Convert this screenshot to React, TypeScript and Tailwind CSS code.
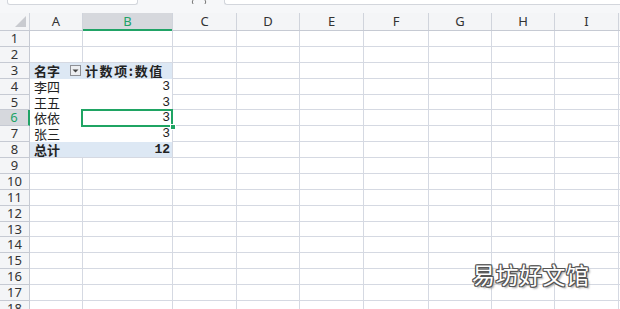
const cols = [
  { key: "A", w: "w-[53px]" },
  { key: "B", w: "w-[90px]" },
  { key: "C", w: "w-[64px]" },
  { key: "D", w: "w-[63px]" },
  { key: "E", w: "w-[64px]" },
  { key: "F", w: "w-[65px]" },
  { key: "G", w: "w-[63px]" },
  { key: "H", w: "w-[63px]" },
  { key: "I", w: "w-[64px]" },
];

const rows = Array.from({ length: 18 }, (_, i) => i + 1);

const names: Record<number, string> = { 4: "李四", 5: "王五", 6: "依依", 7: "张三" };

function PivotCell({ row, col }: { row: number; col: string }) {
  if (row === 3 && col === "A") {
    return (
      <div className="flex items-center justify-between h-full pl-[4px] pr-[2px] font-bold">
        <span>名字</span>
        <span className="w-[11px] h-[11px] border border-[#8e9095] bg-[#eceef1] flex items-center justify-center">
          <svg width="7" height="4" viewBox="0 0 7 4">
            <path d="M0.5 0.5 L6.5 0.5 L3.5 3.5 Z" fill="#444" />
          </svg>
        </span>
      </div>
    );
  }
  if (row === 3 && col === "B") {
    return <div className="h-full pl-[2px] font-bold tracking-[1.6px] whitespace-nowrap">计数项:数值</div>;
  }
  if (row === 8 && col === "A") {
    return <div className="h-full pl-[4px] font-bold">总计</div>;
  }
  if (row === 8 && col === "B") {
    return <div className="h-full text-right pr-[2px] font-bold font-['Liberation_Mono',monospace]">12</div>;
  }
  if (names[row] && col === "A") {
    return <div className="h-full pl-[4px]">{names[row]}</div>;
  }
  if (names[row] && col === "B") {
    return <div className="h-full text-right pr-[2px] font-['Liberation_Mono',monospace]">3</div>;
  }
  return null;
}

export default function App() {
  return (
    <div className="relative w-[620px] h-[309px] overflow-hidden bg-white font-['Noto_Sans','Noto_Sans_CJK_SC',sans-serif] text-[#222]">
      {/* formula bar strip */}
      <div className="h-[13px] bg-[#f6f7f9] flex items-start">
        <div className="ml-[7px] w-[131px] h-[5px] bg-white border border-t-0 border-[#d3d6dc] rounded-b-[3px]" />
        <svg className="ml-[52px]" width="18" height="4" viewBox="0 0 18 4">
          <path d="M3 0 Q1.5 2 3 4" stroke="#777" fill="none" strokeWidth="1" />
          <path d="M15 0 Q16.5 2 15 4" stroke="#777" fill="none" strokeWidth="1" />
        </svg>
        <div className="ml-[16px] flex-1 h-[5px] bg-white border border-t-0 border-r-0 border-[#d3d6dc] rounded-bl-[3px]" />
      </div>

      {/* column headers */}
      <div className="flex h-[18px] bg-[#f4f5f7] border-b border-[#c6cad3] text-[13px] leading-[17px]">
        <div className="w-[30px] shrink-0 border-r border-[#d0d4dc] relative">
          <svg className="absolute right-[3px] bottom-[3px]" width="11" height="11" viewBox="0 0 11 11">
            <path d="M11 0 L11 11 L0 11 Z" fill="#c9cbd0" />
          </svg>
        </div>
        {cols.map((c) =>
          c.key === "B" ? (
            <div key={c.key} className={`${c.w} shrink-0 border-r border-[#d0d4dc] bg-[#d6d8dd] text-center text-[#21a366] relative`}>
              B
              <div className="absolute left-0 right-0 -bottom-px h-[2px] bg-[#21a366]" />
            </div>
          ) : (
            <div key={c.key} className={`${c.w} shrink-0 border-r border-[#d0d4dc] text-center text-[#333]`}>
              {c.key}
            </div>
          )
        )}
        <div className="flex-1" />
      </div>

      {/* rows */}
      {rows.map((r) => {
        const pivotRow = r >= 3 && r <= 8;
        const band = r === 3 || r === 8;
        return (
          <div key={r} className="flex h-[15.875px] text-[13px] leading-[15px]">
            <div
              className={
                r === 6
                  ? "w-[30px] shrink-0 bg-[#d6d8dd] border-r-2 border-[#21a366] border-b border-b-[#c6cad3] text-center text-[#21a366]"
                  : "w-[30px] shrink-0 bg-[#f4f5f7] border-r border-b border-[#c6cad3] text-center text-[#333]"
              }
            >
              {r}
            </div>
            {cols.map((c) => {
              const inPivot = pivotRow && (c.key === "A" || c.key === "B");
              let cls = `${c.w} shrink-0 relative font-['Noto_Sans_CJK_SC',sans-serif]`;
              if (inPivot) {
                if (band) cls += " bg-[#dde8f4]";
                if (c.key === "B") cls += " border-r border-[#d5d9e2]";
                if (r === 8) cls += " border-b border-[#d5d9e2]";
              } else {
                cls += " border-r border-b border-[#d5d9e2]";
              }
              return (
                <div key={c.key} className={cls}>
                  <PivotCell row={r} col={c.key} />
                  {r === 6 && c.key === "B" && (
                    <>
                      <div className="absolute z-10 -left-[2px] -top-[1px] right-[-1px] bottom-[-1px] border-2 border-[#1fa463]" />
                      <div className="absolute z-20 right-[-4px] bottom-[-4px] w-[6px] h-[6px] bg-[#1fa463] border border-white" />
                    </>
                  )}
                </div>
              );
            })}
            <div className="flex-1 border-b border-[#d5d9e2]" />
          </div>
        );
      })}

      {/* watermark */}
      <div className="absolute z-30 left-[472px] top-[259px] text-[23px] leading-[30px] tracking-[0.5px] text-white font-['Noto_Sans_CJK_SC',sans-serif] [text-shadow:1px_0_0_#555,-1px_0_0_#555,0_1px_0_#555,0_-1px_0_#555,1px_1px_0_#555,-1px_-1px_0_#555,1px_-1px_0_#555,-1px_1px_0_#555,2px_2px_2px_#999]">
        易坊好文馆
      </div>
    </div>
  );
}
